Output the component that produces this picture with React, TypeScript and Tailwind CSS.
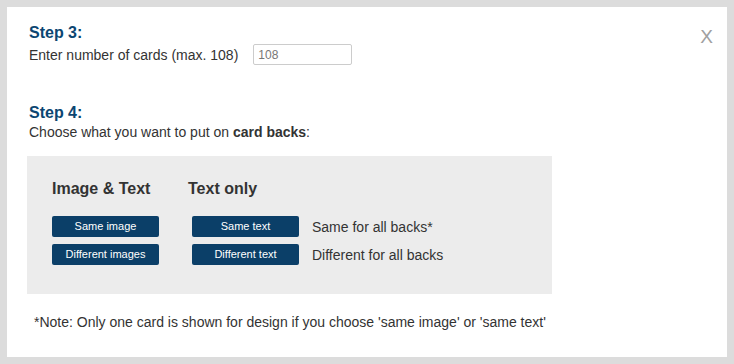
import React from 'react';

const font = { fontFamily: '"Liberation Sans", Arial, sans-serif' };

function Btn({ children }: { children: React.ReactNode }) {
  return (
    <button className="flex h-[21px] w-[107px] items-center justify-center rounded-[2px] bg-[#0b3f68] text-[11px] leading-none text-white">
      {children}
    </button>
  );
}

export default function App() {
  return (
    <div className="h-[364px] w-[734px] bg-[#dcdcdc] p-[7px]" style={font}>
      <div className="relative h-full bg-white pl-[22px] pt-[16px] text-[#333]">
        {/* close */}
        <span className="absolute right-[14px] top-[18px] text-[19px] leading-[24px] text-[#a0a0a0]">X</span>

        {/* Step 3 */}
        <h3 className="text-[16px] font-bold leading-[20px] text-[#0c4672]">Step 3:</h3>
        <div className="mt-[1px] flex h-[21px] items-center">
          <span className="text-[14px] leading-[16px]">Enter number of cards (max. 108)</span>
          <input
            defaultValue="108"
            className="ml-[15px] h-[21px] w-[99px] rounded-[2px] border border-[#cccccc] px-[4px] text-[12px] text-[#777] outline-none"
          />
        </div>

        {/* Step 4 */}
        <h3 className="mt-[38px] text-[16px] font-bold leading-[20px] text-[#0c4672]">Step 4:</h3>
        <p className="mt-[1px] text-[14px] leading-[16px]">
          Choose what you want to put on <b>card backs</b>:
        </p>

        <div className="ml-[-2px] mt-[16px] h-[138px] w-[525px] bg-[#ececec] pl-[25px] pt-[23px]">
          <div className="flex text-[16px] font-bold leading-[20px]">
            <span className="w-[136px]">Image &amp; Text</span>
            <span>Text only</span>
          </div>
          <div className="mt-[17px] flex flex-col gap-[7px]">
            <div className="flex items-center">
              <Btn>Same image</Btn>
              <div className="ml-[33px]">
                <Btn>Same text</Btn>
              </div>
              <span className="ml-[13px] text-[14px] leading-[16px]">Same for all backs*</span>
            </div>
            <div className="flex items-center">
              <Btn>Different images</Btn>
              <div className="ml-[33px]">
                <Btn>Different text</Btn>
              </div>
              <span className="ml-[13px] text-[14px] leading-[16px]">Different for all backs</span>
            </div>
          </div>
        </div>

        <p className="ml-[5px] mt-[20px] text-[14px] leading-[16px]">
          *Note: Only one card is shown for design if you choose 'same image' or 'same text'
        </p>
      </div>
    </div>
  );
}
